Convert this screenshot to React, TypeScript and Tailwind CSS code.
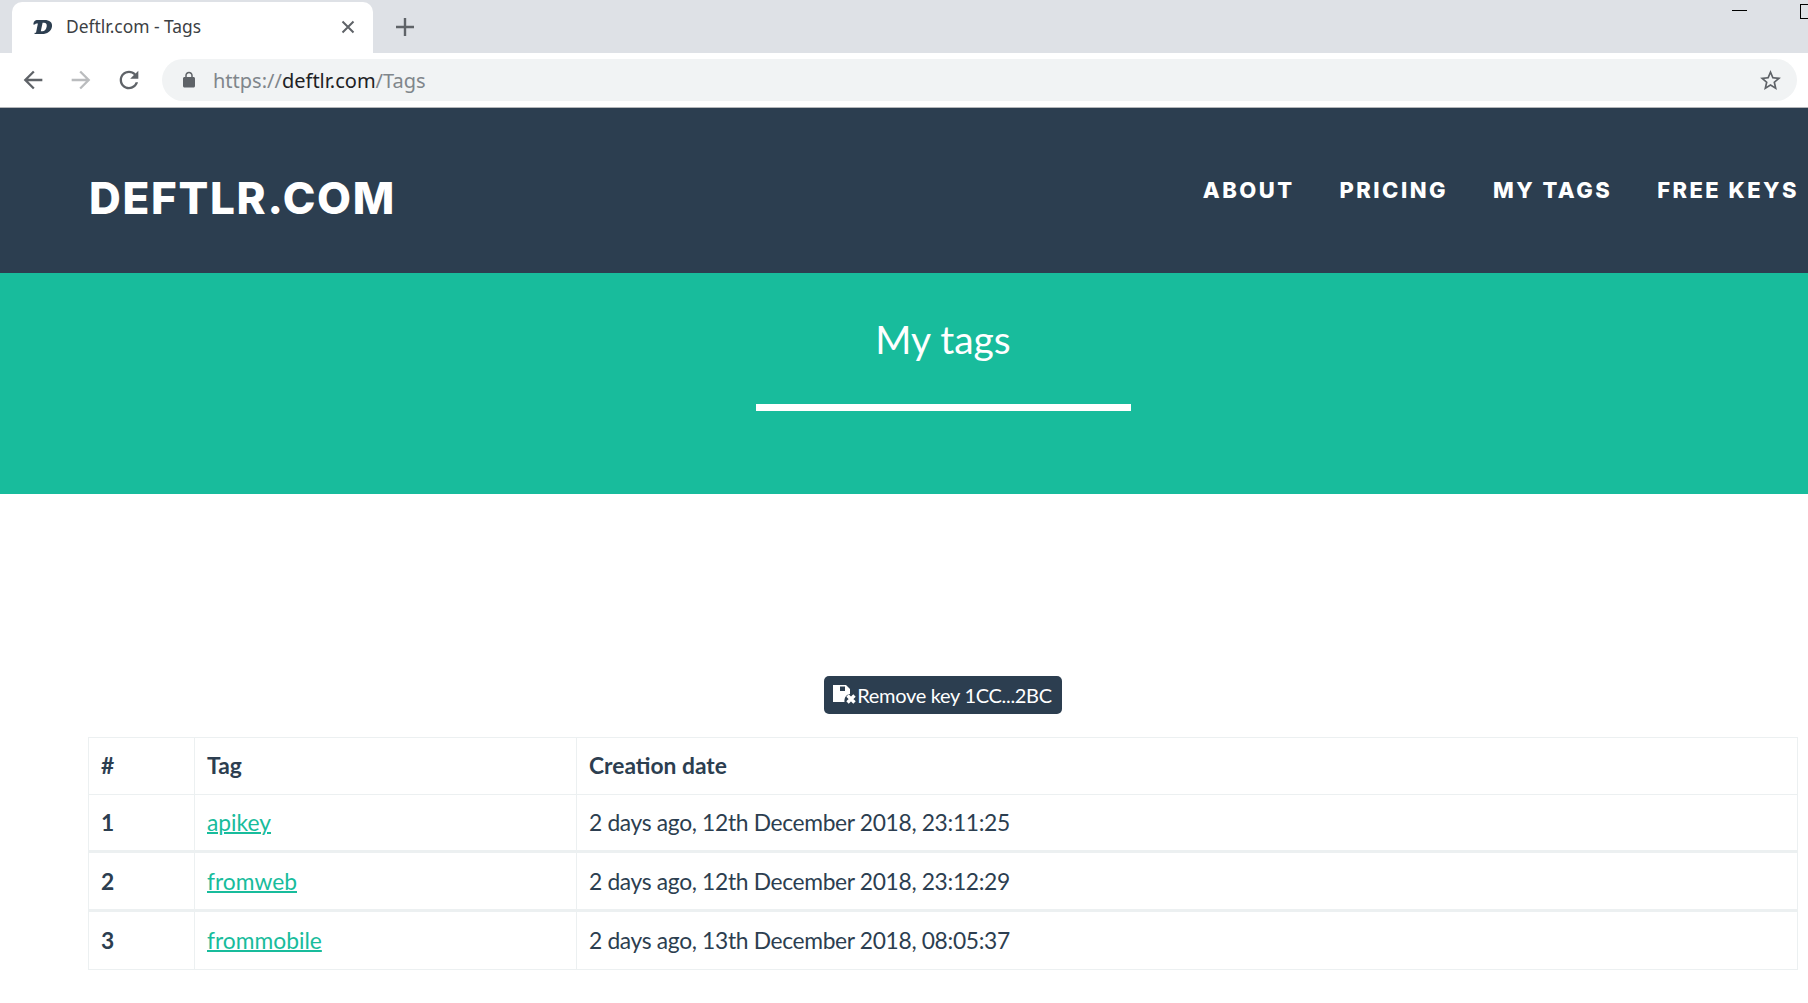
const rows = [
  { id: 1, tag: 'apikey', date: '2 days ago, 12th December 2018, 23:11:25' },
  { id: 2, tag: 'fromweb', date: '2 days ago, 12th December 2018, 23:12:29' },
  { id: 3, tag: 'frommobile', date: '2 days ago, 13th December 2018, 08:05:37' },
]

const navLinks = ['About', 'Pricing', 'My Tags', 'Free Keys']

function TabStrip() {
  return (
    <div className="flex h-[53px] shrink-0 items-end overflow-hidden bg-[#dee1e6]">
      <div className="ml-3 flex h-[51px] w-[361px] shrink-0 items-center rounded-t-[10px] bg-white pb-[2px] pl-[21px] pr-[18px]">
        <svg viewBox="0 0 20 14" className="h-[14px] w-[20px] shrink-0" aria-hidden>
          <path
            fillRule="evenodd"
            fill="#2c3e50"
            d="M.8 2.2 C1.4 .6 3 0 5 0 H11.5 C16.4 0 19.6 2.4 19 6.4 C18.3 11 14.2 14 9 14 H1.4 L1.8 12.8 H3 L4.9 3.4 H3.6 C2.9 3.4 2.3 3.8 1.9 4.6 H.2 Z M9.6 2.8 L7.8 11.2 H9.4 C11.6 11.2 13.2 9.2 13.7 6.4 C14.1 4.2 13 2.8 11 2.8 Z"
          />
        </svg>
        <span className="ml-[13px] font-['Noto_Sans',sans-serif] text-[17.4px] whitespace-nowrap text-[#3c4043]">
          Deftlr.com - Tags
        </span>
        <svg viewBox="0 0 14 14" className="ml-auto h-[14px] w-[14px]" aria-hidden>
          <path d="M1.5 1.5 L12.5 12.5 M12.5 1.5 L1.5 12.5" stroke="#5f6368" strokeWidth="2" fill="none" />
        </svg>
      </div>
      <svg viewBox="0 0 18 18" className="mb-[17px] ml-[23px] h-[18px] w-[18px] shrink-0" aria-hidden>
        <path d="M9 0 V18 M0 9 H18" stroke="#5f6368" strokeWidth="2.4" fill="none" />
      </svg>
      <div className="ml-auto mr-[-8px] flex h-full items-start">
        <div className="mt-[10px] h-px w-[15px] bg-black" />
        <div className="mt-[4px] ml-[53px] h-[15px] w-[16px] shrink-0 border border-black" />
      </div>
    </div>
  )
}

function Toolbar() {
  return (
    <div className="flex h-[55px] shrink-0 items-center border-b border-[#b4b6b9] bg-white pl-[19px] pr-[11px]">
      <svg viewBox="0 0 24 24" className="h-7 w-7 shrink-0" fill="#5f6368" aria-hidden>
        <path d="M20 11H7.83l5.59-5.59L12 4l-8 8 8 8 1.41-1.41L7.83 13H20v-2z" />
      </svg>
      <svg viewBox="0 0 24 24" className="ml-5 h-7 w-7 shrink-0" fill="#babcbe" aria-hidden>
        <path d="M12 4l-1.41 1.41L16.17 11H4v2h12.17l-5.58 5.59L12 20l8-8z" />
      </svg>
      <svg viewBox="0 0 24 24" className="ml-5 h-7 w-7 shrink-0" fill="#5f6368" aria-hidden>
        <path d="M17.65 6.35C16.2 4.9 14.21 4 12 4c-4.42 0-7.99 3.58-7.99 8s3.57 8 7.99 8c3.73 0 6.84-2.55 7.73-6h-2.08c-.82 2.33-3.04 4-5.65 4-3.31 0-6-2.69-6-6s2.69-6 6-6c1.66 0 3.14.69 4.22 1.78L13 11h7V4l-2.35 2.35z" />
      </svg>
      <div className="ml-[19px] flex h-[42px] flex-1 items-center rounded-full bg-[#f1f3f4] pl-[18px] pr-[14px]">
        <svg viewBox="0 0 24 24" className="h-[18px] w-[18px] shrink-0" fill="#5f6368" aria-hidden>
          <path d="M18 8h-1V6c0-2.76-2.24-5-5-5S7 3.24 7 6v2H6c-1.1 0-2 .9-2 2v10c0 1.1.9 2 2 2h12c1.1 0 2-.9 2-2V10c0-1.1-.9-2-2-2zM9 6c0-1.66 1.34-3 3-3s3 1.34 3 3v2H9V6z" />
        </svg>
        <span className="mt-[1px] ml-[15px] font-['Noto_Sans',sans-serif] text-[20px] whitespace-nowrap text-[#80868b]">
          https://<span className="text-[#202124]">deftlr.com</span>/Tags
        </span>
        <svg viewBox="0 0 24 24" className="ml-auto h-[25px] w-[25px]" fill="#5f6368" aria-hidden>
          <path d="M22 9.24l-7.19-.62L12 2 9.19 8.63 2 9.24l5.46 4.73L5.82 21 12 17.27 18.18 21l-1.63-7.03L22 9.24zM12 15.4l-3.76 2.27 1-4.28-3.32-2.88 4.38-.38L12 6.1l1.71 4.04 4.38.38-3.32 2.88 1 4.28L12 15.4z" />
        </svg>
      </div>
    </div>
  )
}

function Navbar() {
  return (
    <nav className="flex h-[165px] shrink-0 bg-[#2c3e50] pl-[89px] pr-[9px] text-white">
      <a className="mt-[63px] font-['Inter',sans-serif] text-[44px] leading-[54px] font-extrabold tracking-[1.7px]">
        DEFTLR.COM
      </a>
      <ul className="mt-[69px] ml-auto flex gap-[45px] self-start font-['Inter',sans-serif] text-[22px] leading-[26px] font-extrabold tracking-[2.45px] uppercase">
        {navLinks.map((link) => (
          <li key={link}>{link}</li>
        ))}
      </ul>
    </nav>
  )
}

function Hero() {
  return (
    <header className="flex h-[221px] shrink-0 flex-col items-center bg-[#18bc9c] pt-[41px] pl-[78px] text-white">
      <h1 className="text-[39px] leading-[50px]">My tags</h1>
      <div className="mt-[40px] h-[7px] w-[375px] bg-white" />
    </header>
  )
}

function RemoveIcon() {
  return (
    <svg viewBox="0 0 24 20" className="h-[20px] w-[24px] shrink-0" aria-hidden>
      <path
        fill="#fff"
        fillRule="evenodd"
        d="M0 0 H13 L17 4 V9 C13.5 9.5 11 12.5 11.5 17 H0 Z M7 1.5 V6 H12 V1.5 Z"
      />
      <path d="M14.5 10.5 L21.5 17.5 M21.5 10.5 L14.5 17.5" stroke="#fff" strokeWidth="3.4" fill="none" />
    </svg>
  )
}

function TagsTable() {
  return (
    <table className="w-full border-collapse border border-[#ecf0f1] text-[22.8px] text-[#2c3e50]">
      <thead>
        <tr className="h-[57px]">
          <th className="w-[106px] border border-[#ecf0f1] pb-[2px] pl-3 text-left font-bold">#</th>
          <th className="w-[382px] border border-[#ecf0f1] pb-[2px] pl-3 text-left font-bold">Tag</th>
          <th className="border border-[#ecf0f1] pb-[2px] pl-3 text-left font-bold">Creation date</th>
        </tr>
      </thead>
      <tbody>
        {rows.map((row, i) => (
          <tr key={row.id} className={i === 0 ? 'h-[57px]' : 'h-[59px] border-t-[3px] border-[#ecf0f1]'}>
            <td className="border-x border-[#ecf0f1] pl-3 font-bold">{row.id}</td>
            <td className="border-x border-[#ecf0f1] pl-3">
              <a className="text-[#18bc9c] underline decoration-2">{row.tag}</a>
            </td>
            <td className="border-x border-[#ecf0f1] pl-3 tracking-[-0.33px]">{row.date}</td>
          </tr>
        ))}
      </tbody>
    </table>
  )
}

export default function App() {
  return (
    <div className="flex h-screen flex-col overflow-hidden bg-white font-['Lato',sans-serif]">
      <TabStrip />
      <Toolbar />
      <Navbar />
      <Hero />
      <main className="flex flex-col items-center pt-[182px] pr-[10px] pl-[88px]">
        <button
          type="button"
          className="flex h-[38px] items-center rounded-[5px] bg-[#2c3e50] pr-[10px] pl-[9px] text-[20px] tracking-[-0.3px] text-white"
        >
          <RemoveIcon />
          Remove key 1CC...2BC
        </button>
        <div className="mt-[23px] w-full">
          <TagsTable />
        </div>
      </main>
    </div>
  )
}
